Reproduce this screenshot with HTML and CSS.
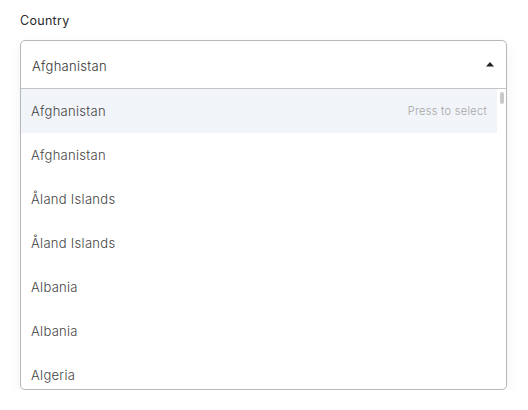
FILE: index.html
```html
<!DOCTYPE html>
<html>
<head>
<meta charset="utf-8">
<link rel="stylesheet" href="styles.css">
</head>
<body>
<div class="field">
  <div class="label">Country</div>
  <div class="select">
    <div class="control">
      <span class="value">Afghanistan</span>
      <svg class="arrow" width="10" height="6" viewBox="0 0 10 6"><path d="M1 5.5 L5 1 L9 5.5 Z" fill="#222"/></svg>
    </div>
    <div class="menu">
      <div class="options">
        <div class="option active"><span>Afghanistan</span><span class="hint">Press to select</span></div>
        <div class="option"><span>Afghanistan</span></div>
        <div class="option"><span>Åland Islands</span></div>
        <div class="option"><span>Åland Islands</span></div>
        <div class="option"><span>Albania</span></div>
        <div class="option"><span>Albania</span></div>
        <div class="option"><span>Algeria</span></div>
      </div>
      <div class="track"><div class="thumb"></div></div>
    </div>
  </div>
</div>
</body>
</html>
```
FILE: styles.css
```css
html, body {
  margin: 0;
  padding: 0;
  background: #fff;
}
body {
  font-family: "Inter", "Noto Sans", sans-serif;
  color: #333;
  font-weight: 300;
  letter-spacing: 0.3px;
}
.field {
  padding: 13px 21px 0 20px;
}
.label {
  font-size: 12.5px;
  line-height: 16px;
  color: #2b2b2b;
  font-weight: 400;
  margin-bottom: 11px;
}
.select {
  border: 1px solid #b8b8b8;
  border-radius: 5px;
  box-shadow: 0 6px 14px rgba(0, 0, 0, 0.06);
  overflow: hidden;
}
.control {
  height: 47px;
  display: flex;
  align-items: center;
  justify-content: space-between;
  padding: 0 10px 0 11px;
  border-bottom: 1px solid #c4c4c4;
  font-size: 13px;
  color: #333;
}
.value {
  padding-top: 2px;
}
.arrow {
  margin-right: 1px;
  margin-top: -2px;
}
.menu {
  display: flex;
  height: 300px;
  overflow: hidden;
}
.options {
  flex: 1;
  overflow: hidden;
}
.option {
  height: 44px;
  flex-shrink: 0;
  display: flex;
  align-items: center;
  justify-content: space-between;
  padding: 0 10px;
  font-size: 13px;
  color: #444;
}
.option.active {
  background: #f1f4f9;
}
.hint {
  font-size: 11px;
  color: #a5a5a5;
}
.track {
  width: 9px;
}
.thumb {
  width: 4px;
  height: 12px;
  margin: 3px 0 0 3px;
  border-radius: 2px;
  background: #c9c9c9;
}
```
